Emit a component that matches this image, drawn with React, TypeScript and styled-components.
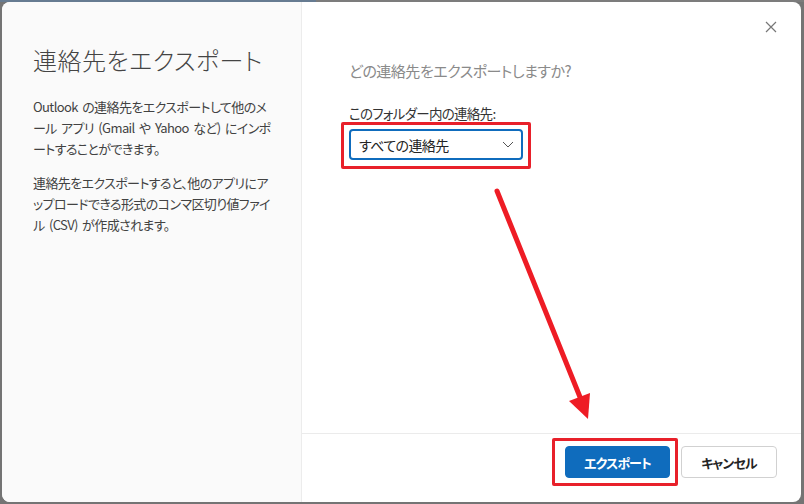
import React from 'react';
import styled, { createGlobalStyle } from 'styled-components';

const GlobalStyle = createGlobalStyle`
  html, body {
    margin: 0;
    padding: 0;
  }
  body {
    width: 804px;
    height: 504px;
    overflow: hidden;
    font-family: "Noto Sans CJK JP", "Noto Sans", sans-serif;
    font-feature-settings: "palt";
  }
`;

const Backdrop = styled.div`
  position: relative;
  width: 804px;
  height: 504px;
  box-sizing: border-box;
  padding: 2px 3px 2px 2px;
  background: linear-gradient(to right, #667b91 0, #667b91 316px, #7c7c7c 316px) top / 100% 2px no-repeat,
    #747474;
  display: flex;
`;

const Dialog = styled.div`
  flex: 1;
  display: flex;
  background: #fff;
  border-radius: 8px;
  overflow: hidden;
`;

const Aside = styled.div`
  width: 300px;
  flex-shrink: 0;
  box-sizing: border-box;
  background: #fafafa;
  border-right: 1px solid #ececec;
  padding: 40px 0 0 31px;
  color: #424242;
`;

const Title = styled.h1`
  margin: 0 0 18px;
  font-size: 24px;
  letter-spacing: 0.5px;
  line-height: 36px;
  font-weight: 300;
  color: #444;
`;

const Para = styled.p`
  margin: 0 0 13px;
  font-size: 13px;
  letter-spacing: -0.6px;
  word-spacing: 2px;
  line-height: 21px;
  white-space: nowrap;
  color: #424242;
`;

const Main = styled.div`
  flex: 1;
  display: flex;
  flex-direction: column;
  position: relative;
`;

const CloseButton = styled.button`
  position: absolute;
  top: 15px;
  right: 20px;
  width: 20px;
  height: 20px;
  padding: 0;
  border: none;
  background: none;
  display: flex;
  align-items: center;
  justify-content: center;
`;

const Content = styled.div`
  flex: 1;
  padding: 57px 30px 0 47px;
`;

const Question = styled.div`
  font-size: 15px;
  letter-spacing: -0.5px;
  line-height: 24px;
  color: #8a8a8a;
  margin-bottom: 20px;
`;

const Label = styled.div`
  font-size: 13.5px;
  letter-spacing: -0.7px;
  line-height: 20px;
  color: #333;
  margin-bottom: 6px;
`;

const Marked = styled.div`
  position: relative;
  display: inline-flex;
`;

const RedBox = styled.span<{ $inset: string }>`
  position: absolute;
  inset: ${(p) => p.$inset};
  border: 3px solid #e8202a;
  border-radius: 2px;
  pointer-events: none;
`;

const Select = styled.div`
  width: 174px;
  height: 31px;
  box-sizing: border-box;
  border: 2px solid #0f6cbd;
  border-radius: 4px;
  display: flex;
  align-items: center;
  justify-content: space-between;
  padding: 0 7px 0 8px;
  font-size: 14px;
  letter-spacing: -0.6px;
  color: #242424;
`;

const Footer = styled.div`
  height: 69px;
  box-sizing: border-box;
  border-top: 1px solid #ebebeb;
  display: flex;
  justify-content: flex-end;
  align-items: flex-start;
  gap: 11px;
  padding: 12px 24px 0 0;
`;

const Button = styled.button<{ $primary?: boolean }>`
  height: 32px;
  box-sizing: border-box;
  border-radius: 4px;
  font-family: inherit;
  font-feature-settings: "palt";
  font-size: 13px;
  letter-spacing: -0.9px;
  font-weight: 700;
  border: 1px solid ${(p) => (p.$primary ? '#0f6cbd' : '#d1d1d1')};
  background: ${(p) => (p.$primary ? '#0f6cbd' : '#fff')};
  color: ${(p) => (p.$primary ? '#fff' : '#242424')};
  width: ${(p) => (p.$primary ? '105px' : '96px')};
  padding: 0;
`;

const Arrow = styled.svg`
  position: absolute;
  left: 0;
  top: 0;
  pointer-events: none;
`;

export default function App() {
  return (
    <>
      <GlobalStyle />
      <Backdrop>
        <Dialog>
          <Aside>
            <Title>連絡先をエクスポート</Title>
            <Para>
              Outlook の連絡先をエクスポートして他のメ
              <br />
              ール アプリ (Gmail や Yahoo など) にインポ
              <br />
              ートすることができます。
            </Para>
            <Para>
              連絡先をエクスポートすると、他のアプリにア
              <br />
              ップロードできる形式のコンマ区切り値ファイ
              <br />
              ル (CSV) が作成されます。
            </Para>
          </Aside>
          <Main>
            <CloseButton aria-label="閉じる">
              <svg width="12" height="12" viewBox="0 0 12 12">
                <path d="M1 1L11 11M11 1L1 11" stroke="#777" strokeWidth="1.2" />
              </svg>
            </CloseButton>
            <Content>
              <Question>どの連絡先をエクスポートしますか?</Question>
              <Label>このフォルダー内の連絡先:</Label>
              <Marked>
                <Select>
                  <span>すべての連絡先</span>
                  <svg width="12" height="7" viewBox="0 0 12 7">
                    <path d="M1 1L6 6L11 1" fill="none" stroke="#555" strokeWidth="1" />
                  </svg>
                </Select>
                <RedBox $inset="-7px -8px -9px -8px" />
              </Marked>
            </Content>
            <Footer>
              <Marked>
                <Button $primary>エクスポート</Button>
                <RedBox $inset="-8px -8px -8px -13px" />
              </Marked>
              <Button>キャンセル</Button>
            </Footer>
          </Main>
        </Dialog>
        <Arrow width="804" height="504" viewBox="0 0 804 504">
          <line x1="497" y1="191" x2="582" y2="402" stroke="#ee1c25" strokeWidth="5" strokeLinecap="round" />
          <polygon points="569,401 590,393 588,419" fill="#ee1c25" />
        </Arrow>
      </Backdrop>
    </>
  );
}
